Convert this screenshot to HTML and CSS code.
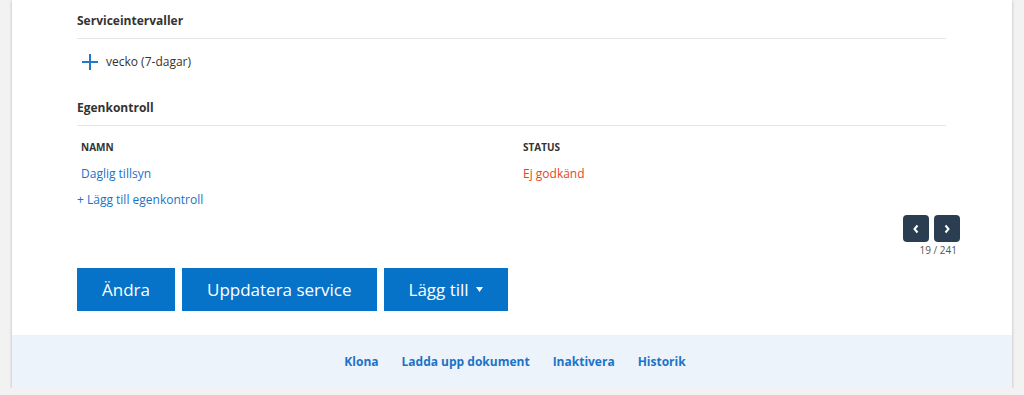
FILE: index.html
```html
<!DOCTYPE html>
<html lang="sv">
<head>
    <meta charset="UTF-8">
    <title>Service</title>
    <link rel="stylesheet" href="styles.css">
</head>
<body>
    <div class="card">
        <div class="card-body">
            <h2 class="section-title">Serviceintervaller</h2>
            <div class="interval">
                <svg class="plus" width="16" height="16" viewBox="0 0 16 16">
                    <path d="M8 0 V16 M0 8 H16" stroke="#2577c9" stroke-width="2" fill="none"/>
                </svg>
                <span>vecko (7-dagar)</span>
            </div>

            <h2 class="section-title spaced">Egenkontroll</h2>
            <div class="checks">
                <div class="th">Namn</div>
                <div class="th">Status</div>
                <a class="td link" href="#">Daglig tillsyn</a>
                <div class="td failed">Ej godkänd</div>
            </div>
            <a class="add-link" href="#">+ Lägg till egenkontroll</a>

            <div class="pager">
                <div class="pager-buttons">
                    <button class="pager-btn" aria-label="Föregående">
                        <svg width="8" height="10" viewBox="0 0 8 10"><path d="M5.5 1.5 L2.5 5 L5.5 8.5" stroke="#fff" stroke-width="2" fill="none"/></svg>
                    </button>
                    <button class="pager-btn" aria-label="Nästa">
                        <svg width="8" height="10" viewBox="0 0 8 10"><path d="M2.5 1.5 L5.5 5 L2.5 8.5" stroke="#fff" stroke-width="2" fill="none"/></svg>
                    </button>
                </div>
                <div class="pager-count">19 / 241</div>
            </div>

            <div class="actions">
                <button class="btn">Ändra</button>
                <button class="btn">Uppdatera service</button>
                <button class="btn">Lägg till
                    <svg class="caret" width="7" height="5" viewBox="0 0 7 5"><path d="M0 0 H7 L3.5 5 Z" fill="#fff"/></svg>
                </button>
            </div>
        </div>
        <div class="card-footer">
            <a href="#">Klona</a>
            <a href="#">Ladda upp dokument</a>
            <a href="#">Inaktivera</a>
            <a href="#">Historik</a>
        </div>
    </div>
</body>
</html>
```

FILE: styles.css
```css
body {
    margin: 0;
    background: #f2f2f2;
    font-family: 'Open Sans', 'Liberation Sans', sans-serif;
    color: #333;
    font-size: 12px;
}
.card {
    width: 1000px;
    margin: 0 12px;
    background: #fff;
    box-shadow: 0 1px 3px rgba(0, 0, 0, 0.25);
}
.card-body {
    padding: 12px 66px 24px 65px;
}
.section-title {
    margin: 0;
    font-size: 12px;
    font-weight: 700;
    line-height: 18px;
    padding-bottom: 8px;
    border-bottom: 1px solid #e6e6e6;
}
.section-title.spaced {
    margin-top: 28px;
}
.interval {
    display: flex;
    align-items: center;
    gap: 8px;
    margin-top: 14px;
    padding-left: 5px;
    line-height: 18px;
}
.checks {
    display: grid;
    grid-template-columns: 442px 1fr;
    row-gap: 10px;
    margin-top: 13px;
    padding-left: 4px;
}
.th {
    font-size: 10px;
    font-weight: 700;
    text-transform: uppercase;
    line-height: 16px;
}
.td {
    line-height: 18px;
}
a {
    color: #1a73c8;
    text-decoration: none;
}
.failed {
    color: #e8441c;
}
.add-link {
    display: block;
    margin-top: 8px;
    line-height: 18px;
}
.pager {
    display: flex;
    flex-direction: column;
    align-items: flex-end;
    margin: 6px -14px 0 0;
}
.pager-buttons {
    display: flex;
    gap: 5px;
}
.pager-btn {
    width: 26px;
    height: 27px;
    border: none;
    border-radius: 4px;
    background: #2b3e51;
    display: flex;
    align-items: center;
    justify-content: center;
    padding: 0;
}
.pager-count {
    font-size: 10px;
    line-height: 16px;
    color: #555;
    padding-right: 3px;
}
.actions {
    display: flex;
    gap: 7px;
    margin-top: 10px;
}
.btn {
    height: 43px;
    padding: 0 25px;
    border: none;
    background: #0673c9;
    color: #fff;
    font-family: inherit;
    font-size: 17px;
    display: flex;
    align-items: center;
    gap: 7px;
}
.card-footer {
    height: 53px;
    background: #edf3fb;
    display: flex;
    align-items: center;
    justify-content: center;
    gap: 23px;
    padding-left: 6px;
}
.card-footer a {
    font-weight: 700;
    font-size: 12px;
}
```
